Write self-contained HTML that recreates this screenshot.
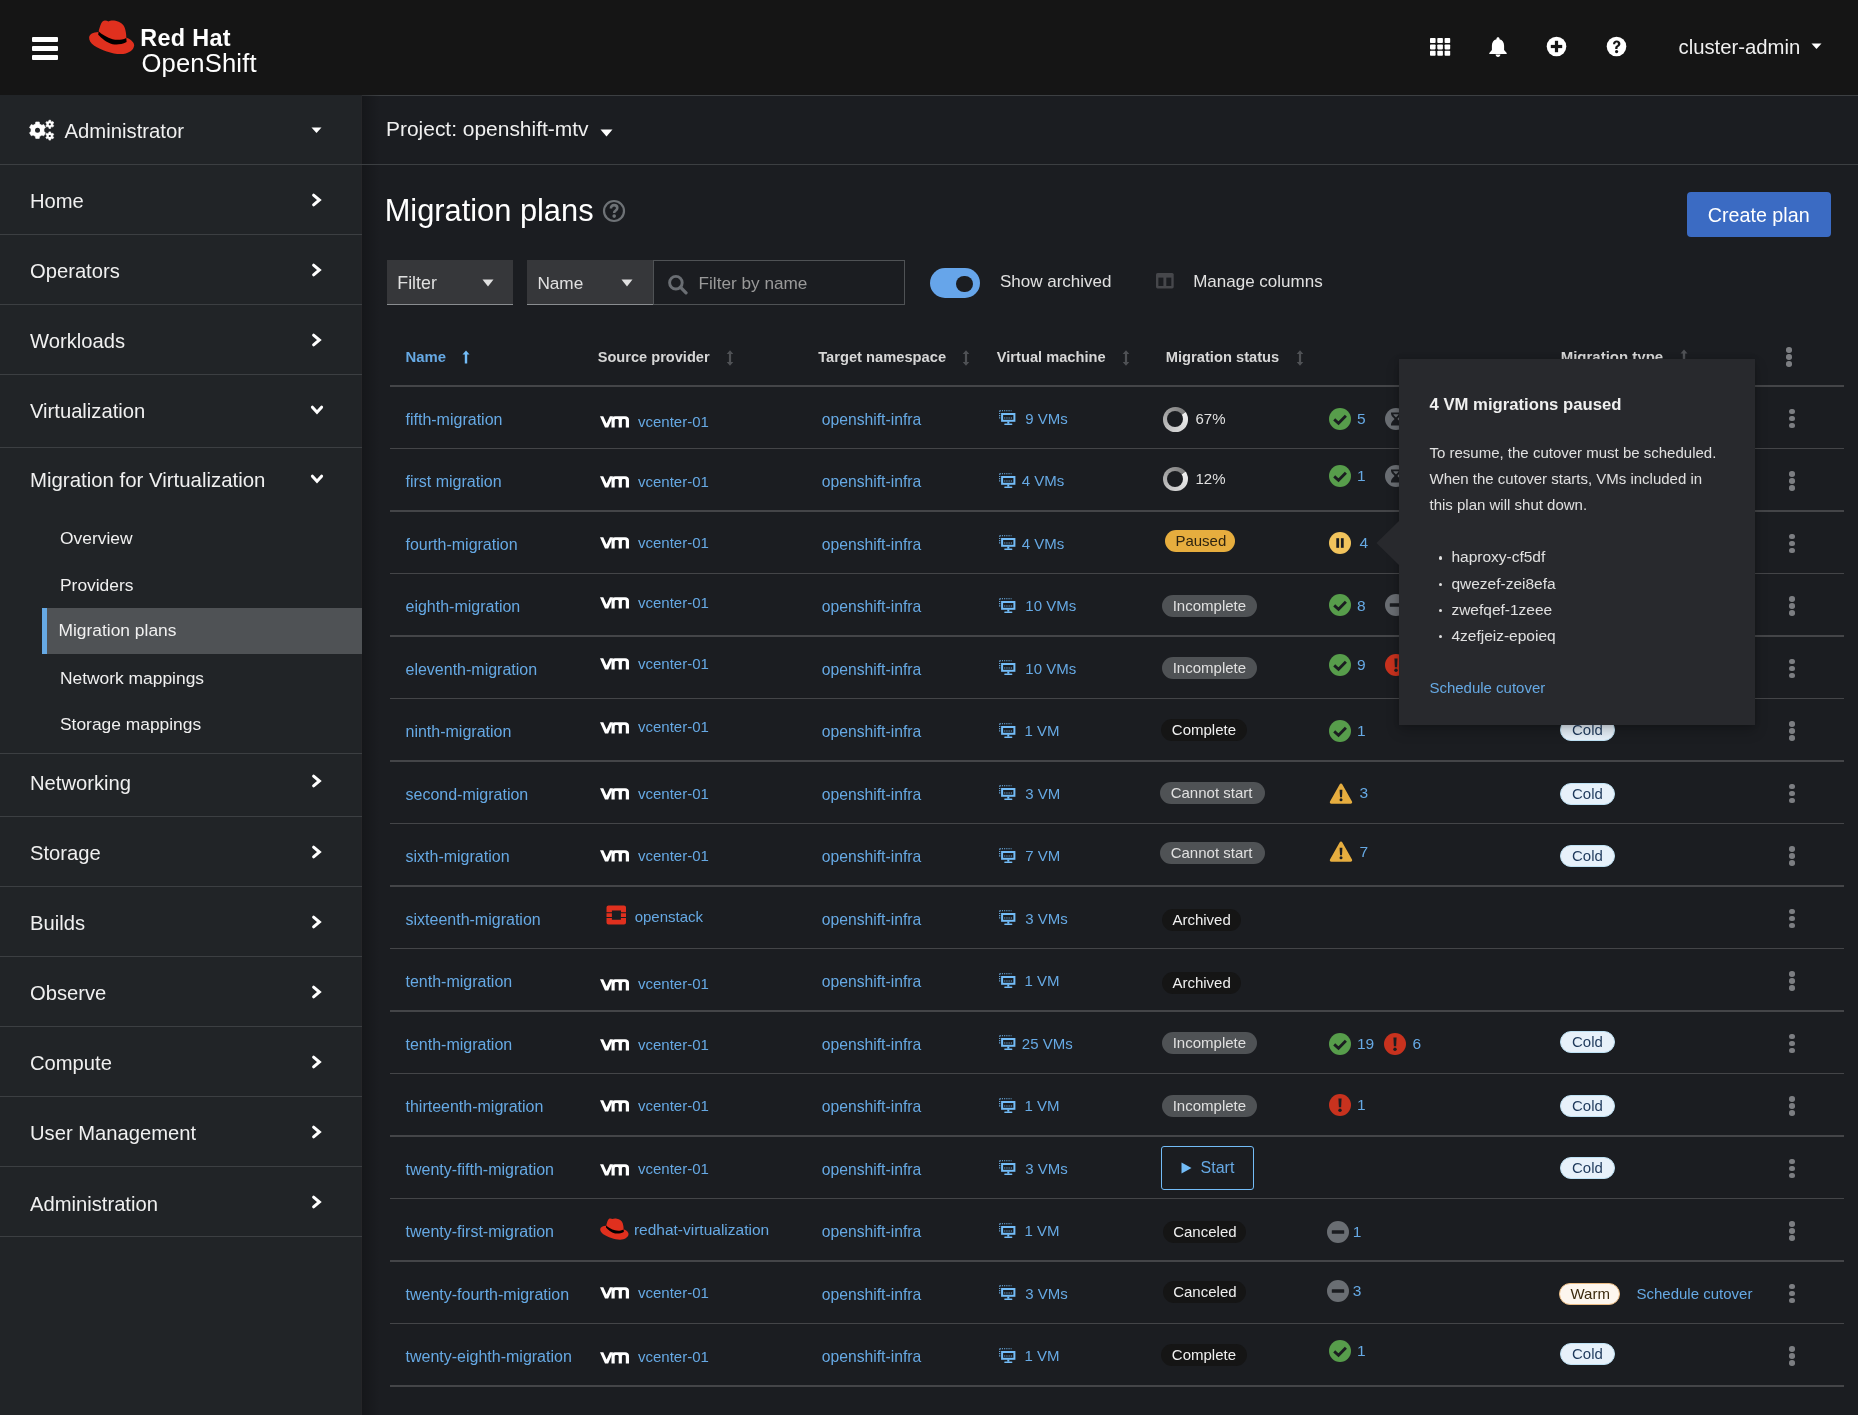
<!DOCTYPE html>
<html><head><meta charset="utf-8"><title>Migration plans</title>
<style>
html,body{margin:0;padding:0;width:1858px;height:1415px;overflow:hidden;background:#1b1d21;}
body{position:relative;font-family:'Liberation Sans', sans-serif;}
.t{position:absolute;line-height:0;white-space:nowrap;}
.r{position:absolute;display:block;}
</style></head><body><div id="root" style="position:absolute;left:0;top:0;width:1858px;height:1415px;will-change:transform">
<div class="r" style="left:0px;top:0px;width:1858px;height:95px;background:#151515;"></div>
<div class="r" style="left:0px;top:95px;width:362px;height:1320px;background:#212427;"></div>
<div class="r" style="left:362px;top:95px;width:1496px;height:1320px;background:#1b1d21;"></div>
<div class="r" style="left:362px;top:95px;width:1496px;height:1px;background:#3c3f42;"></div>
<div class="r" style="left:362px;top:95px;width:18px;height:1320px;background:linear-gradient(90deg, rgba(0,0,0,0.22), rgba(0,0,0,0));"></div>
<div class="r" style="left:361px;top:95px;width:1px;height:1320px;background:#252528;"></div>
<div class="r" style="left:32px;top:37px;width:26px;height:4.5px;background:#fff;border-radius:1px"></div>
<div class="r" style="left:32px;top:46.2px;width:26px;height:4.5px;background:#fff;border-radius:1px"></div>
<div class="r" style="left:32px;top:55.4px;width:26px;height:4.5px;background:#fff;border-radius:1px"></div>
<svg class="r" style="left:84px;top:15px;" width="56" height="45" viewBox="0 0 56 45"><path d="M5.1 22.3C5.5 19.3 9 17.2 14.5 17L43.2 22.9C46.5 24.2 50.1 27 50.1 30.2C50.1 35 44 39.1 36.6 39.1C28 39.1 17 35 10 30.5C6.8 28.4 4.9 25.2 5.1 22.3Z" fill="#e0301e"/><path d="M14.6 16.5C15.8 12 17 7.5 18.8 6.2C20.5 5 23 5.8 24.5 6.4C26 5.6 28.5 5.2 31.5 5.8C36 6.8 39.5 9 40.8 13C41.8 16 42.3 19.5 42.3 22.9C37 25.5 32 25 28.6 24.2C23 22.5 18 19.5 14.6 16.5Z" fill="#e0301e"/><path d="M14.6 16.5C18 19.5 23 22.5 28.6 24.2C32 25 37 25.5 42.3 22.9L42.6 27C37.5 29.6 33 29.8 28.6 29.2C22.5 27.8 17.5 23.2 14.2 19.8Z" fill="#000"/></svg>
<div class="t" style="left:140.3px;top:37.59px;font-size:23.4px;color:#fff;font-weight:700;letter-spacing:0.3px;">Red Hat</div>
<div class="t" style="left:141.5px;top:62.73px;font-size:25.6px;color:#fff;letter-spacing:0.15px;">OpenShift</div>
<svg class="r" style="left:1430px;top:38px;" width="21" height="19" viewBox="0 0 21 19"><rect x="0.0" y="0.0" width="5.6" height="5" rx="0.8" fill="#fff"/><rect x="7.3" y="0.0" width="5.6" height="5" rx="0.8" fill="#fff"/><rect x="14.6" y="0.0" width="5.6" height="5" rx="0.8" fill="#fff"/><rect x="0.0" y="6.4" width="5.6" height="5" rx="0.8" fill="#fff"/><rect x="7.3" y="6.4" width="5.6" height="5" rx="0.8" fill="#fff"/><rect x="14.6" y="6.4" width="5.6" height="5" rx="0.8" fill="#fff"/><rect x="0.0" y="12.8" width="5.6" height="5" rx="0.8" fill="#fff"/><rect x="7.3" y="12.8" width="5.6" height="5" rx="0.8" fill="#fff"/><rect x="14.6" y="12.8" width="5.6" height="5" rx="0.8" fill="#fff"/></svg>
<svg class="r" style="left:1488px;top:36px;" width="20" height="22" viewBox="0 0 20 22"><path d="M10 1.2c0.9 0 1.5 0.6 1.5 1.4v0.6c3 0.7 4.6 3.2 4.6 6.5v4.2l2.6 3.2v0.9H1.3v-0.9l2.6-3.2V9.7c0-3.3 1.6-5.8 4.6-6.5V2.6c0-0.8 0.6-1.4 1.5-1.4z" fill="#fff"/><path d="M7.6 18.6h4.8c0 1.4-1.1 2.4-2.4 2.4s-2.4-1-2.4-2.4z" fill="#fff"/></svg>
<svg class="r" style="left:1546px;top:36px;" width="21" height="21" viewBox="0 0 21 21"><circle cx="10.5" cy="10.5" r="9.8" fill="#fff"/><rect x="8.9" y="4.8" width="3.2" height="11.4" fill="#151515"/><rect x="4.8" y="8.9" width="11.4" height="3.2" fill="#151515"/></svg>
<svg class="r" style="left:1606px;top:36px;" width="21" height="21" viewBox="0 0 21 21"><circle cx="10.5" cy="10.5" r="9.8" fill="#fff"/><path d="M7 8.2c0-2.2 1.6-3.6 3.7-3.6 2.2 0 3.7 1.3 3.7 3.2 0 1.5-0.9 2.3-1.9 3-0.8 0.5-1 0.8-1 1.6v0.5H9.2v-0.7c0-1.3 0.5-2 1.5-2.7 0.8-0.5 1.2-0.9 1.2-1.6 0-0.8-0.6-1.3-1.3-1.3-0.8 0-1.4 0.6-1.4 1.6z" fill="#151515"/><circle cx="10.6" cy="15.6" r="1.6" fill="#151515"/></svg>
<div class="t" style="left:1678.5px;top:47.47px;font-size:20.3px;color:#f0f0f0;">cluster-admin</div>
<svg class="r" style="left:1811px;top:43px;" width="11" height="7" viewBox="0 0 11 7"><path d="M0.5 0.5h10L5.5 6z" fill="#fff"/></svg>
<svg class="r" style="left:28px;top:119px;" width="28" height="23" viewBox="0 0 28 23"><path d="M7.75 2.98 L11.25 2.98 L11.54 4.92 L13.92 6.30 L15.74 5.58 L17.49 8.60 L15.96 9.83 L15.96 12.57 L17.49 13.80 L15.74 16.82 L13.92 16.10 L11.54 17.48 L11.25 19.42 L7.75 19.42 L7.46 17.48 L5.08 16.10 L3.26 16.82 L1.51 13.80 L3.04 12.57 L3.04 9.83 L1.51 8.60 L3.26 5.58 L5.08 6.30 L7.46 4.92Z" fill="#fff" stroke="#fff" stroke-width="0.6" stroke-linejoin="round"/><circle cx="9.5" cy="11.2" r="2.5" fill="#212427"/><path d="M20.93 1.19 L22.67 1.19 L22.76 2.35 L23.87 3.00 L24.92 2.49 L25.79 4.00 L24.83 4.66 L24.83 5.94 L25.79 6.60 L24.92 8.11 L23.87 7.60 L22.76 8.25 L22.67 9.41 L20.93 9.41 L20.84 8.25 L19.73 7.60 L18.68 8.11 L17.81 6.60 L18.77 5.94 L18.77 4.66 L17.81 4.00 L18.68 2.49 L19.73 3.00 L20.84 2.35Z" fill="#fff" stroke="#fff" stroke-width="0.6" stroke-linejoin="round"/><circle cx="21.8" cy="5.3" r="1.1" fill="#212427"/><path d="M20.93 12.89 L22.67 12.89 L22.76 14.05 L23.87 14.70 L24.92 14.19 L25.79 15.70 L24.83 16.36 L24.83 17.64 L25.79 18.30 L24.92 19.81 L23.87 19.30 L22.76 19.95 L22.67 21.11 L20.93 21.11 L20.84 19.95 L19.73 19.30 L18.68 19.81 L17.81 18.30 L18.77 17.64 L18.77 16.36 L17.81 15.70 L18.68 14.19 L19.73 14.70 L20.84 14.05Z" fill="#fff" stroke="#fff" stroke-width="0.6" stroke-linejoin="round"/><circle cx="21.8" cy="17.0" r="1.1" fill="#212427"/></svg>
<div class="t" style="left:64.5px;top:130.67px;font-size:20.3px;color:#f0f0f0;">Administrator</div>
<svg class="r" style="left:311px;top:127px;" width="11" height="7" viewBox="0 0 11 7"><path d="M0.5 0.5h10L5.5 6z" fill="#fff"/></svg>
<div class="r" style="left:0px;top:164px;width:362px;height:1px;background:#3c3f42;"></div>
<div class="t" style="left:30.0px;top:200.90px;font-size:20.2px;color:#f0f0f0;">Home</div>
<svg class="r" style="left:309px;top:191.5px;" width="16" height="16" viewBox="0 0 16 16"><path d="M4.6 3.1L10.4 8 4.6 12.9" fill="none" stroke="#fff" stroke-width="3" stroke-linecap="round" stroke-linejoin="miter"/></svg>
<div class="r" style="left:0px;top:234px;width:362px;height:1px;background:#3c3f42;"></div>
<div class="t" style="left:30.0px;top:270.90px;font-size:20.2px;color:#f0f0f0;">Operators</div>
<svg class="r" style="left:309px;top:261.5px;" width="16" height="16" viewBox="0 0 16 16"><path d="M4.6 3.1L10.4 8 4.6 12.9" fill="none" stroke="#fff" stroke-width="3" stroke-linecap="round" stroke-linejoin="miter"/></svg>
<div class="r" style="left:0px;top:304px;width:362px;height:1px;background:#3c3f42;"></div>
<div class="t" style="left:30.0px;top:340.90px;font-size:20.2px;color:#f0f0f0;">Workloads</div>
<svg class="r" style="left:309px;top:331.5px;" width="16" height="16" viewBox="0 0 16 16"><path d="M4.6 3.1L10.4 8 4.6 12.9" fill="none" stroke="#fff" stroke-width="3" stroke-linecap="round" stroke-linejoin="miter"/></svg>
<div class="r" style="left:0px;top:374px;width:362px;height:1px;background:#3c3f42;"></div>
<div class="t" style="left:30.0px;top:411.10px;font-size:20.2px;color:#f0f0f0;">Virtualization</div>
<svg class="r" style="left:309px;top:402.0px;" width="16" height="16" viewBox="0 0 16 16"><path d="M3.4 5.2L8 10.3 12.6 5.2" fill="none" stroke="#fff" stroke-width="3" stroke-linecap="round" stroke-linejoin="miter"/></svg>
<div class="r" style="left:0px;top:446.5px;width:362px;height:1.5px;background:#3c3f42;"></div>
<div class="t" style="left:30.0px;top:480.33px;font-size:20.4px;color:#f0f0f0;">Migration for Virtualization</div>
<svg class="r" style="left:309px;top:471.29999999999995px;" width="16" height="16" viewBox="0 0 16 16"><path d="M3.4 5.2L8 10.3 12.6 5.2" fill="none" stroke="#fff" stroke-width="3" stroke-linecap="round" stroke-linejoin="miter"/></svg>
<div class="r" style="left:42px;top:608px;width:320px;height:46px;background:#4f5255;"></div>
<div class="r" style="left:42px;top:608px;width:5px;height:46px;background:#66a9e4;"></div>
<div class="t" style="left:60.0px;top:538.17px;font-size:17.4px;color:#f0f0f0;">Overview</div>
<div class="t" style="left:60.0px;top:585.47px;font-size:17.4px;color:#f0f0f0;">Providers</div>
<div class="t" style="left:58.5px;top:630.47px;font-size:17.4px;color:#f0f0f0;">Migration plans</div>
<div class="t" style="left:60.0px;top:677.97px;font-size:17.4px;color:#f0f0f0;">Network mappings</div>
<div class="t" style="left:60.0px;top:723.77px;font-size:17.4px;color:#f0f0f0;">Storage mappings</div>
<div class="r" style="left:0px;top:753px;width:362px;height:1px;background:#3c3f42;"></div>
<div class="t" style="left:30.0px;top:782.60px;font-size:20.2px;color:#f0f0f0;">Networking</div>
<svg class="r" style="left:309px;top:773.2px;" width="16" height="16" viewBox="0 0 16 16"><path d="M4.6 3.1L10.4 8 4.6 12.9" fill="none" stroke="#fff" stroke-width="3" stroke-linecap="round" stroke-linejoin="miter"/></svg>
<div class="r" style="left:0px;top:816px;width:362px;height:1px;background:#3c3f42;"></div>
<div class="t" style="left:30.0px;top:853.00px;font-size:20.2px;color:#f0f0f0;">Storage</div>
<svg class="r" style="left:309px;top:843.6px;" width="16" height="16" viewBox="0 0 16 16"><path d="M4.6 3.1L10.4 8 4.6 12.9" fill="none" stroke="#fff" stroke-width="3" stroke-linecap="round" stroke-linejoin="miter"/></svg>
<div class="r" style="left:0px;top:886px;width:362px;height:1px;background:#3c3f42;"></div>
<div class="t" style="left:30.0px;top:923.00px;font-size:20.2px;color:#f0f0f0;">Builds</div>
<svg class="r" style="left:309px;top:913.6px;" width="16" height="16" viewBox="0 0 16 16"><path d="M4.6 3.1L10.4 8 4.6 12.9" fill="none" stroke="#fff" stroke-width="3" stroke-linecap="round" stroke-linejoin="miter"/></svg>
<div class="r" style="left:0px;top:956px;width:362px;height:1px;background:#3c3f42;"></div>
<div class="t" style="left:30.0px;top:993.00px;font-size:20.2px;color:#f0f0f0;">Observe</div>
<svg class="r" style="left:309px;top:983.6px;" width="16" height="16" viewBox="0 0 16 16"><path d="M4.6 3.1L10.4 8 4.6 12.9" fill="none" stroke="#fff" stroke-width="3" stroke-linecap="round" stroke-linejoin="miter"/></svg>
<div class="r" style="left:0px;top:1026px;width:362px;height:1px;background:#3c3f42;"></div>
<div class="t" style="left:30.0px;top:1063.00px;font-size:20.2px;color:#f0f0f0;">Compute</div>
<svg class="r" style="left:309px;top:1053.6px;" width="16" height="16" viewBox="0 0 16 16"><path d="M4.6 3.1L10.4 8 4.6 12.9" fill="none" stroke="#fff" stroke-width="3" stroke-linecap="round" stroke-linejoin="miter"/></svg>
<div class="r" style="left:0px;top:1096px;width:362px;height:1px;background:#3c3f42;"></div>
<div class="t" style="left:30.0px;top:1133.00px;font-size:20.2px;color:#f0f0f0;">User Management</div>
<svg class="r" style="left:309px;top:1123.6px;" width="16" height="16" viewBox="0 0 16 16"><path d="M4.6 3.1L10.4 8 4.6 12.9" fill="none" stroke="#fff" stroke-width="3" stroke-linecap="round" stroke-linejoin="miter"/></svg>
<div class="r" style="left:0px;top:1166px;width:362px;height:1px;background:#3c3f42;"></div>
<div class="t" style="left:30.0px;top:1203.60px;font-size:20.2px;color:#f0f0f0;">Administration</div>
<svg class="r" style="left:309px;top:1194.1999999999998px;" width="16" height="16" viewBox="0 0 16 16"><path d="M4.6 3.1L10.4 8 4.6 12.9" fill="none" stroke="#fff" stroke-width="3" stroke-linecap="round" stroke-linejoin="miter"/></svg>
<div class="r" style="left:0px;top:1236px;width:362px;height:1px;background:#3c3f42;"></div>
<div class="t" style="left:386.0px;top:128.64px;font-size:20.95px;color:#f0f0f0;">Project: openshift-mtv</div>
<svg class="r" style="left:599.5px;top:128.5px;" width="13" height="8" viewBox="0 0 13 8"><path d="M0.5 0.5h12L6.5 7.5z" fill="#fff"/></svg>
<div class="r" style="left:362px;top:164px;width:1496px;height:1px;background:#3c3f42;"></div>
<div class="t" style="left:384.7px;top:211.13px;font-size:30.8px;color:#fff;">Migration plans</div>
<svg class="r" style="left:602px;top:199px;" width="24" height="24" viewBox="0 0 24 24"><circle cx="12" cy="12" r="10" fill="none" stroke="#6e7276" stroke-width="2.2"/><path d="M8.9 9.4C8.9 7.3 10.3 6.1 12.1 6.1C14 6.1 15.3 7.3 15.3 9C15.3 10.6 14 11.3 13.1 12C12.4 12.5 12.2 13 12.2 13.9" fill="none" stroke="#6e7276" stroke-width="2.6"/><circle cx="12.2" cy="17.1" r="1.8" fill="#6e7276"/></svg>
<div class="r" style="left:1687px;top:192px;width:144px;height:45px;background:#3b6bc3;border-radius:4px"></div>
<div class="t" style="left:1707.8px;top:215.47px;font-size:19.7px;color:#fff;">Create plan</div>
<div class="r" style="left:387px;top:260px;width:126px;height:45px;background:#36373a;border-bottom:1.5px solid #8a8d90;box-sizing:border-box"></div>
<div class="t" style="left:397.3px;top:282.83px;font-size:17.8px;color:#e0e0e0;">Filter</div>
<svg class="r" style="left:481.5px;top:278.5px;" width="12" height="8" viewBox="0 0 12 8"><path d="M0.5 0.5h11L6 7.5z" fill="#e0e0e0"/></svg>
<div class="r" style="left:527px;top:260px;width:126px;height:45px;background:#36373a;border-bottom:1.5px solid #8a8d90;box-sizing:border-box"></div>
<div class="t" style="left:537.4px;top:283.04px;font-size:17.2px;color:#e0e0e0;">Name</div>
<svg class="r" style="left:621.4px;top:278.5px;" width="12" height="8" viewBox="0 0 12 8"><path d="M0.5 0.5h11L6 7.5z" fill="#e0e0e0"/></svg>
<div class="r" style="left:653px;top:260px;width:252px;height:45px;background:transparent;border:1px solid #4f5255;box-sizing:border-box"></div>
<svg class="r" style="left:667px;top:272.5px;" width="22" height="22" viewBox="0 0 22 22"><circle cx="8.9" cy="9.7" r="6.3" fill="none" stroke="#6a6e73" stroke-width="2.9"/><path d="M13.4 14.2l5.6 5.6" stroke="#6a6e73" stroke-width="3.3" stroke-linecap="round"/></svg>
<div class="t" style="left:698.5px;top:283.04px;font-size:17.2px;color:#9a9a9a;">Filter by name</div>
<div class="r" style="left:930px;top:268px;width:50px;height:30px;background:#66a5ea;border-radius:15px"></div>
<div class="r" style="left:956.4px;top:275.8px;width:16.4px;height:16.4px;border-radius:50%;background:#1b1d21"></div>
<div class="t" style="left:1000.0px;top:281.81px;font-size:17.0px;color:#e0e0e0;">Show archived</div>
<svg class="r" style="left:1156px;top:273.4px;" width="18" height="16" viewBox="0 0 18 16"><rect x="0" y="0" width="17.7" height="15.4" rx="1.6" fill="#46474b"/><rect x="2.4" y="4.6" width="5" height="8.4" fill="#1b1d21"/><rect x="10.3" y="4.6" width="5" height="8.4" fill="#1b1d21"/></svg>
<div class="t" style="left:1193.2px;top:281.81px;font-size:17.0px;color:#e0e0e0;">Manage columns</div>
<div class="t" style="left:405.5px;top:357.34px;font-size:14.9px;color:#66a9e4;font-weight:700;">Name</div>
<svg class="r" style="left:462px;top:349.5px;" width="8" height="14" viewBox="0 0 8 14"><path d="M4 0.5l3.5 4H5.2v9H2.8v-9H0.5z" fill="#73bcf7"/></svg>
<div class="t" style="left:597.7px;top:357.44px;font-size:14.6px;color:#d6d6d6;font-weight:700;">Source provider</div>
<svg class="r" style="left:725.5px;top:349.7px;" width="8" height="16" viewBox="0 0 8 16"><path d="M4 0.3l3.3 3.7H5.1v8h2.2L4 15.7 0.7 12h2.2V4H0.7z" fill="#4f5155"/></svg>
<div class="t" style="left:818.2px;top:357.41px;font-size:14.7px;color:#d6d6d6;font-weight:700;">Target namespace</div>
<svg class="r" style="left:961.5px;top:349.7px;" width="8" height="16" viewBox="0 0 8 16"><path d="M4 0.3l3.3 3.7H5.1v8h2.2L4 15.7 0.7 12h2.2V4H0.7z" fill="#4f5155"/></svg>
<div class="t" style="left:996.8px;top:357.42px;font-size:14.65px;color:#d6d6d6;font-weight:700;">Virtual machine</div>
<svg class="r" style="left:1122px;top:349.7px;" width="8" height="16" viewBox="0 0 8 16"><path d="M4 0.3l3.3 3.7H5.1v8h2.2L4 15.7 0.7 12h2.2V4H0.7z" fill="#4f5155"/></svg>
<div class="t" style="left:1165.8px;top:357.41px;font-size:14.7px;color:#d6d6d6;font-weight:700;">Migration status</div>
<svg class="r" style="left:1295.5px;top:349.7px;" width="8" height="16" viewBox="0 0 8 16"><path d="M4 0.3l3.3 3.7H5.1v8h2.2L4 15.7 0.7 12h2.2V4H0.7z" fill="#4f5155"/></svg>
<div class="t" style="left:1560.7px;top:357.30px;font-size:15.0px;color:#d6d6d6;font-weight:700;">Migration type</div>
<svg class="r" style="left:1680px;top:349px;" width="8" height="14" viewBox="0 0 8 14"><path d="M4 0.5l3.5 4H5.2v9H2.8v-9H0.5z" fill="#4f5155"/></svg>
<div class="r" style="left:390px;top:385px;width:1454px;height:1.5px;background:#444548;"></div>
<div class="r" style="left:1786.2px;top:347.2px;width:5.6px;height:5.6px;border-radius:50%;background:#7c7e82"></div>
<div class="r" style="left:1786.2px;top:354.1px;width:5.6px;height:5.6px;border-radius:50%;background:#7c7e82"></div>
<div class="r" style="left:1786.2px;top:361.0px;width:5.6px;height:5.6px;border-radius:50%;background:#7c7e82"></div>
<div class="t" style="left:405.5px;top:419.51px;font-size:16px;color:#66a9e4;">fifth-migration</div>
<svg class="r" style="left:599.2px;top:415.34999999999997px;" width="31" height="13" viewBox="0 0 31 13"><path d="M1 1.2h3.3l3.3 7.4 3.3-7.4h3.1L9.2 12.4H6z" fill="#fff"/><path d="M12.5 12.4V4.6c0-2.2 1.3-3.4 3.5-3.4h10.2c2.3 0 3.8 1.3 3.8 3.6v7.6h-3.2V5.4c0-0.8-0.6-1.4-1.4-1.4h-1.1c-0.8 0-1.4 0.6-1.4 1.4v7h-3.2V5.4c0-0.8-0.6-1.4-1.4-1.4h-1.2c-0.8 0-1.4 0.6-1.4 1.4v7z" fill="#fff"/></svg>
<div class="t" style="left:638.0px;top:421.95px;font-size:15px;color:#66a9e4;">vcenter-01</div>
<div class="t" style="left:821.8px;top:419.61px;font-size:15.7px;color:#66a9e4;">openshift-infra</div>
<svg class="r" style="left:998.5px;top:410.05px;" width="18" height="16" viewBox="0 0 18 16"><path d="M0.7 0.7H12.5M0.7 0.7V9" fill="none" stroke="#73bcf7" stroke-width="1.1" stroke-dasharray="1.1 1.1"/><rect x="3.1" y="4" width="12.3" height="6.8" fill="none" stroke="#73bcf7" stroke-width="2"/><path d="M5.2 8h8" stroke="#73bcf7" stroke-width="1.1" stroke-dasharray="1.1 1.1"/><rect x="8.3" y="11.5" width="2" height="2.2" fill="#73bcf7"/><rect x="5.2" y="13.4" width="8.2" height="1.5" rx="0.7" fill="#73bcf7"/></svg>
<div class="t" style="left:1025.3px;top:418.85px;font-size:15px;color:#66a9e4;">9 VMs</div>
<div class="r" style="left:1163.0px;top:407.1px;width:24.6px;height:24.6px;border-radius:50%;background:conic-gradient(#8c8c8c 0deg,#7c7c7c 52deg,#f0f0f0 56deg,#e2e2e2 110deg,#cacaca 200deg,#ababab 280deg,#8c8c8c 360deg)"></div>
<div class="r" style="left:1167.3px;top:411.4px;width:16px;height:16px;border-radius:50%;background:#1b1d21"></div>
<div class="t" style="left:1195.5px;top:419.35px;font-size:15px;color:#e0e0e0;">67%</div>
<svg class="r" style="left:1329.2px;top:407.85px;" width="22" height="22" viewBox="0 0 22 22"><circle cx="11" cy="11" r="11" fill="#579d4b"/><path d="M5.2 11.4l4.3 3.9 7.4-7.5" fill="none" stroke="#1b1d21" stroke-width="2.9"/></svg>
<div class="t" style="left:1357.0px;top:419.08px;font-size:15.5px;color:#66a9e4;">5</div>
<svg class="r" style="left:1385.2px;top:407.85px;" width="22" height="22" viewBox="0 0 22 22"><circle cx="11" cy="11" r="11" fill="#6a6e73"/><path d="M6 4.5h10v1.3c0 2.2-2.6 3.8-3.6 5.2 1 1.4 3.6 3 3.6 5.2v1.3H6v-1.3c0-2.2 2.6-3.8 3.6-5.2C8.6 9.6 6 8 6 5.8z" fill="#1b1d21"/><path d="M8.3 6.3h5.4c-0.4 1.3-2 2.4-2.7 3.3-0.7-0.9-2.3-2-2.7-3.3z" fill="#6a6e73"/></svg>
<div class="r" style="left:1789.2px;top:408.9px;width:5.6px;height:5.6px;border-radius:50%;background:#7c7e82"></div>
<div class="r" style="left:1789.2px;top:415.8px;width:5.6px;height:5.6px;border-radius:50%;background:#7c7e82"></div>
<div class="r" style="left:1789.2px;top:422.6px;width:5.6px;height:5.6px;border-radius:50%;background:#7c7e82"></div>
<div class="r" style="left:390px;top:447.5px;width:1454px;height:1.5px;background:#444548;"></div>
<div class="t" style="left:405.5px;top:482.01px;font-size:16px;color:#66a9e4;">first migration</div>
<svg class="r" style="left:599.2px;top:475.45px;" width="31" height="13" viewBox="0 0 31 13"><path d="M1 1.2h3.3l3.3 7.4 3.3-7.4h3.1L9.2 12.4H6z" fill="#fff"/><path d="M12.5 12.4V4.6c0-2.2 1.3-3.4 3.5-3.4h10.2c2.3 0 3.8 1.3 3.8 3.6v7.6h-3.2V5.4c0-0.8-0.6-1.4-1.4-1.4h-1.1c-0.8 0-1.4 0.6-1.4 1.4v7h-3.2V5.4c0-0.8-0.6-1.4-1.4-1.4h-1.2c-0.8 0-1.4 0.6-1.4 1.4v7z" fill="#fff"/></svg>
<div class="t" style="left:638.0px;top:482.05px;font-size:15px;color:#66a9e4;">vcenter-01</div>
<div class="t" style="left:821.8px;top:482.11px;font-size:15.7px;color:#66a9e4;">openshift-infra</div>
<svg class="r" style="left:998.5px;top:472.55px;" width="18" height="16" viewBox="0 0 18 16"><path d="M0.7 0.7H12.5M0.7 0.7V9" fill="none" stroke="#73bcf7" stroke-width="1.1" stroke-dasharray="1.1 1.1"/><rect x="3.1" y="4" width="12.3" height="6.8" fill="none" stroke="#73bcf7" stroke-width="2"/><path d="M5.2 8h8" stroke="#73bcf7" stroke-width="1.1" stroke-dasharray="1.1 1.1"/><rect x="8.3" y="11.5" width="2" height="2.2" fill="#73bcf7"/><rect x="5.2" y="13.4" width="8.2" height="1.5" rx="0.7" fill="#73bcf7"/></svg>
<div class="t" style="left:1021.8px;top:481.35px;font-size:15px;color:#66a9e4;">4 VMs</div>
<div class="r" style="left:1163.0px;top:466.6px;width:24.6px;height:24.6px;border-radius:50%;background:conic-gradient(#8c8c8c 0deg,#7c7c7c 52deg,#f0f0f0 56deg,#e2e2e2 110deg,#cacaca 200deg,#ababab 280deg,#8c8c8c 360deg)"></div>
<div class="r" style="left:1167.3px;top:470.9px;width:16px;height:16px;border-radius:50%;background:#1b1d21"></div>
<div class="t" style="left:1195.5px;top:478.85px;font-size:15px;color:#e0e0e0;">12%</div>
<svg class="r" style="left:1329.2px;top:464.85px;" width="22" height="22" viewBox="0 0 22 22"><circle cx="11" cy="11" r="11" fill="#579d4b"/><path d="M5.2 11.4l4.3 3.9 7.4-7.5" fill="none" stroke="#1b1d21" stroke-width="2.9"/></svg>
<div class="t" style="left:1357.0px;top:476.08px;font-size:15.5px;color:#66a9e4;">1</div>
<svg class="r" style="left:1385.2px;top:464.85px;" width="22" height="22" viewBox="0 0 22 22"><circle cx="11" cy="11" r="11" fill="#6a6e73"/><path d="M6 4.5h10v1.3c0 2.2-2.6 3.8-3.6 5.2 1 1.4 3.6 3 3.6 5.2v1.3H6v-1.3c0-2.2 2.6-3.8 3.6-5.2C8.6 9.6 6 8 6 5.8z" fill="#1b1d21"/><path d="M8.3 6.3h5.4c-0.4 1.3-2 2.4-2.7 3.3-0.7-0.9-2.3-2-2.7-3.3z" fill="#6a6e73"/></svg>
<div class="r" style="left:1789.2px;top:471.4px;width:5.6px;height:5.6px;border-radius:50%;background:#7c7e82"></div>
<div class="r" style="left:1789.2px;top:478.2px;width:5.6px;height:5.6px;border-radius:50%;background:#7c7e82"></div>
<div class="r" style="left:1789.2px;top:485.1px;width:5.6px;height:5.6px;border-radius:50%;background:#7c7e82"></div>
<div class="r" style="left:390px;top:510.0px;width:1454px;height:1.5px;background:#444548;"></div>
<div class="t" style="left:405.5px;top:544.51px;font-size:16px;color:#66a9e4;">fourth-migration</div>
<svg class="r" style="left:599.2px;top:536.25px;" width="31" height="13" viewBox="0 0 31 13"><path d="M1 1.2h3.3l3.3 7.4 3.3-7.4h3.1L9.2 12.4H6z" fill="#fff"/><path d="M12.5 12.4V4.6c0-2.2 1.3-3.4 3.5-3.4h10.2c2.3 0 3.8 1.3 3.8 3.6v7.6h-3.2V5.4c0-0.8-0.6-1.4-1.4-1.4h-1.1c-0.8 0-1.4 0.6-1.4 1.4v7h-3.2V5.4c0-0.8-0.6-1.4-1.4-1.4h-1.2c-0.8 0-1.4 0.6-1.4 1.4v7z" fill="#fff"/></svg>
<div class="t" style="left:638.0px;top:542.85px;font-size:15px;color:#66a9e4;">vcenter-01</div>
<div class="t" style="left:821.8px;top:544.61px;font-size:15.7px;color:#66a9e4;">openshift-infra</div>
<svg class="r" style="left:998.5px;top:535.05px;" width="18" height="16" viewBox="0 0 18 16"><path d="M0.7 0.7H12.5M0.7 0.7V9" fill="none" stroke="#73bcf7" stroke-width="1.1" stroke-dasharray="1.1 1.1"/><rect x="3.1" y="4" width="12.3" height="6.8" fill="none" stroke="#73bcf7" stroke-width="2"/><path d="M5.2 8h8" stroke="#73bcf7" stroke-width="1.1" stroke-dasharray="1.1 1.1"/><rect x="8.3" y="11.5" width="2" height="2.2" fill="#73bcf7"/><rect x="5.2" y="13.4" width="8.2" height="1.5" rx="0.7" fill="#73bcf7"/></svg>
<div class="t" style="left:1021.8px;top:543.85px;font-size:15px;color:#66a9e4;">4 VMs</div>
<div class="r" style="left:1165px;top:530.4px;width:70px;height:22px;background:#e6ad3e;border-radius:12px;"></div>
<div class="t" style="left:1175.4px;top:541.40px;font-size:15px;color:#2f2410;">Paused</div>
<svg class="r" style="left:1329px;top:531.75px;" width="22" height="22" viewBox="0 0 22 22"><circle cx="11" cy="11" r="11" fill="#f1c35c"/><rect x="7.3" y="6.2" width="2.8" height="9.6" fill="#1b1d21"/><rect x="11.9" y="6.2" width="2.8" height="9.6" fill="#1b1d21"/></svg>
<div class="t" style="left:1359.5px;top:542.98px;font-size:15.5px;color:#66a9e4;">4</div>
<div class="r" style="left:1789.2px;top:533.9px;width:5.6px;height:5.6px;border-radius:50%;background:#7c7e82"></div>
<div class="r" style="left:1789.2px;top:540.8px;width:5.6px;height:5.6px;border-radius:50%;background:#7c7e82"></div>
<div class="r" style="left:1789.2px;top:547.6px;width:5.6px;height:5.6px;border-radius:50%;background:#7c7e82"></div>
<div class="r" style="left:390px;top:572.5px;width:1454px;height:1.5px;background:#444548;"></div>
<div class="t" style="left:405.5px;top:607.01px;font-size:16px;color:#66a9e4;">eighth-migration</div>
<svg class="r" style="left:599.2px;top:595.9000000000001px;" width="31" height="13" viewBox="0 0 31 13"><path d="M1 1.2h3.3l3.3 7.4 3.3-7.4h3.1L9.2 12.4H6z" fill="#fff"/><path d="M12.5 12.4V4.6c0-2.2 1.3-3.4 3.5-3.4h10.2c2.3 0 3.8 1.3 3.8 3.6v7.6h-3.2V5.4c0-0.8-0.6-1.4-1.4-1.4h-1.1c-0.8 0-1.4 0.6-1.4 1.4v7h-3.2V5.4c0-0.8-0.6-1.4-1.4-1.4h-1.2c-0.8 0-1.4 0.6-1.4 1.4v7z" fill="#fff"/></svg>
<div class="t" style="left:638.0px;top:602.50px;font-size:15px;color:#66a9e4;">vcenter-01</div>
<div class="t" style="left:821.8px;top:607.11px;font-size:15.7px;color:#66a9e4;">openshift-infra</div>
<svg class="r" style="left:998.5px;top:597.55px;" width="18" height="16" viewBox="0 0 18 16"><path d="M0.7 0.7H12.5M0.7 0.7V9" fill="none" stroke="#73bcf7" stroke-width="1.1" stroke-dasharray="1.1 1.1"/><rect x="3.1" y="4" width="12.3" height="6.8" fill="none" stroke="#73bcf7" stroke-width="2"/><path d="M5.2 8h8" stroke="#73bcf7" stroke-width="1.1" stroke-dasharray="1.1 1.1"/><rect x="8.3" y="11.5" width="2" height="2.2" fill="#73bcf7"/><rect x="5.2" y="13.4" width="8.2" height="1.5" rx="0.7" fill="#73bcf7"/></svg>
<div class="t" style="left:1025.3px;top:606.35px;font-size:15px;color:#66a9e4;">10 VMs</div>
<div class="r" style="left:1162.3px;top:594.55px;width:94.7px;height:22px;background:#4f5255;border-radius:12px;"></div>
<div class="t" style="left:1172.7px;top:605.55px;font-size:15px;color:#e0e0e0;">Incomplete</div>
<svg class="r" style="left:1329.2px;top:594.35px;" width="22" height="22" viewBox="0 0 22 22"><circle cx="11" cy="11" r="11" fill="#579d4b"/><path d="M5.2 11.4l4.3 3.9 7.4-7.5" fill="none" stroke="#1b1d21" stroke-width="2.9"/></svg>
<div class="t" style="left:1357.0px;top:605.58px;font-size:15.5px;color:#66a9e4;">8</div>
<svg class="r" style="left:1385.3px;top:594.35px;" width="22" height="22" viewBox="0 0 22 22"><circle cx="11" cy="11" r="11" fill="#6a6e73"/><rect x="4.8" y="9.2" width="12.4" height="3.6" rx="0.6" fill="#1b1d21"/></svg>
<div class="r" style="left:1789.2px;top:596.4px;width:5.6px;height:5.6px;border-radius:50%;background:#7c7e82"></div>
<div class="r" style="left:1789.2px;top:603.2px;width:5.6px;height:5.6px;border-radius:50%;background:#7c7e82"></div>
<div class="r" style="left:1789.2px;top:610.1px;width:5.6px;height:5.6px;border-radius:50%;background:#7c7e82"></div>
<div class="r" style="left:390px;top:635.0px;width:1454px;height:1.5px;background:#444548;"></div>
<div class="t" style="left:405.5px;top:669.51px;font-size:16px;color:#66a9e4;">eleventh-migration</div>
<svg class="r" style="left:599.2px;top:657.0px;" width="31" height="13" viewBox="0 0 31 13"><path d="M1 1.2h3.3l3.3 7.4 3.3-7.4h3.1L9.2 12.4H6z" fill="#fff"/><path d="M12.5 12.4V4.6c0-2.2 1.3-3.4 3.5-3.4h10.2c2.3 0 3.8 1.3 3.8 3.6v7.6h-3.2V5.4c0-0.8-0.6-1.4-1.4-1.4h-1.1c-0.8 0-1.4 0.6-1.4 1.4v7h-3.2V5.4c0-0.8-0.6-1.4-1.4-1.4h-1.2c-0.8 0-1.4 0.6-1.4 1.4v7z" fill="#fff"/></svg>
<div class="t" style="left:638.0px;top:663.60px;font-size:15px;color:#66a9e4;">vcenter-01</div>
<div class="t" style="left:821.8px;top:669.61px;font-size:15.7px;color:#66a9e4;">openshift-infra</div>
<svg class="r" style="left:998.5px;top:660.05px;" width="18" height="16" viewBox="0 0 18 16"><path d="M0.7 0.7H12.5M0.7 0.7V9" fill="none" stroke="#73bcf7" stroke-width="1.1" stroke-dasharray="1.1 1.1"/><rect x="3.1" y="4" width="12.3" height="6.8" fill="none" stroke="#73bcf7" stroke-width="2"/><path d="M5.2 8h8" stroke="#73bcf7" stroke-width="1.1" stroke-dasharray="1.1 1.1"/><rect x="8.3" y="11.5" width="2" height="2.2" fill="#73bcf7"/><rect x="5.2" y="13.4" width="8.2" height="1.5" rx="0.7" fill="#73bcf7"/></svg>
<div class="t" style="left:1025.3px;top:668.85px;font-size:15px;color:#66a9e4;">10 VMs</div>
<div class="r" style="left:1162.3px;top:657.25px;width:94.7px;height:22px;background:#4f5255;border-radius:12px;"></div>
<div class="t" style="left:1172.7px;top:668.25px;font-size:15px;color:#e0e0e0;">Incomplete</div>
<svg class="r" style="left:1329.2px;top:654.25px;" width="22" height="22" viewBox="0 0 22 22"><circle cx="11" cy="11" r="11" fill="#579d4b"/><path d="M5.2 11.4l4.3 3.9 7.4-7.5" fill="none" stroke="#1b1d21" stroke-width="2.9"/></svg>
<div class="t" style="left:1357.0px;top:665.48px;font-size:15.5px;color:#66a9e4;">9</div>
<svg class="r" style="left:1385.3px;top:654.25px;" width="22" height="22" viewBox="0 0 22 22"><circle cx="11" cy="11" r="11" fill="#c8321e"/><path d="M9.4 4.6h3.2l-0.5 8.6h-2.2z" fill="#1b1d21"/><circle cx="11" cy="16.3" r="1.7" fill="#1b1d21"/></svg>
<div class="r" style="left:1789.2px;top:658.9px;width:5.6px;height:5.6px;border-radius:50%;background:#7c7e82"></div>
<div class="r" style="left:1789.2px;top:665.8px;width:5.6px;height:5.6px;border-radius:50%;background:#7c7e82"></div>
<div class="r" style="left:1789.2px;top:672.6px;width:5.6px;height:5.6px;border-radius:50%;background:#7c7e82"></div>
<div class="r" style="left:390px;top:697.5px;width:1454px;height:1.5px;background:#444548;"></div>
<div class="t" style="left:405.5px;top:732.01px;font-size:16px;color:#66a9e4;">ninth-migration</div>
<svg class="r" style="left:599.2px;top:720.8000000000001px;" width="31" height="13" viewBox="0 0 31 13"><path d="M1 1.2h3.3l3.3 7.4 3.3-7.4h3.1L9.2 12.4H6z" fill="#fff"/><path d="M12.5 12.4V4.6c0-2.2 1.3-3.4 3.5-3.4h10.2c2.3 0 3.8 1.3 3.8 3.6v7.6h-3.2V5.4c0-0.8-0.6-1.4-1.4-1.4h-1.1c-0.8 0-1.4 0.6-1.4 1.4v7h-3.2V5.4c0-0.8-0.6-1.4-1.4-1.4h-1.2c-0.8 0-1.4 0.6-1.4 1.4v7z" fill="#fff"/></svg>
<div class="t" style="left:638.0px;top:727.40px;font-size:15px;color:#66a9e4;">vcenter-01</div>
<div class="t" style="left:821.8px;top:732.11px;font-size:15.7px;color:#66a9e4;">openshift-infra</div>
<svg class="r" style="left:998.5px;top:722.55px;" width="18" height="16" viewBox="0 0 18 16"><path d="M0.7 0.7H12.5M0.7 0.7V9" fill="none" stroke="#73bcf7" stroke-width="1.1" stroke-dasharray="1.1 1.1"/><rect x="3.1" y="4" width="12.3" height="6.8" fill="none" stroke="#73bcf7" stroke-width="2"/><path d="M5.2 8h8" stroke="#73bcf7" stroke-width="1.1" stroke-dasharray="1.1 1.1"/><rect x="8.3" y="11.5" width="2" height="2.2" fill="#73bcf7"/><rect x="5.2" y="13.4" width="8.2" height="1.5" rx="0.7" fill="#73bcf7"/></svg>
<div class="t" style="left:1024.6px;top:731.35px;font-size:15px;color:#66a9e4;">1 VM</div>
<div class="r" style="left:1161.4px;top:719.45px;width:85.8px;height:22px;background:#151515;border-radius:12px;"></div>
<div class="t" style="left:1171.8px;top:730.45px;font-size:15px;color:#f0f0f0;">Complete</div>
<svg class="r" style="left:1329.2px;top:719.6px;" width="22" height="22" viewBox="0 0 22 22"><circle cx="11" cy="11" r="11" fill="#579d4b"/><path d="M5.2 11.4l4.3 3.9 7.4-7.5" fill="none" stroke="#1b1d21" stroke-width="2.9"/></svg>
<div class="t" style="left:1357.0px;top:730.83px;font-size:15.5px;color:#66a9e4;">1</div>
<div class="r" style="left:1560px;top:719.2px;width:55.1px;height:22px;background:#e7f1fa;border-radius:12px;border:1px solid #bee1f4;box-sizing:border-box;"></div>
<div class="t" style="left:1572.0px;top:730.20px;font-size:15px;color:#1f3a5c;">Cold</div>
<div class="r" style="left:1789.2px;top:721.4px;width:5.6px;height:5.6px;border-radius:50%;background:#7c7e82"></div>
<div class="r" style="left:1789.2px;top:728.2px;width:5.6px;height:5.6px;border-radius:50%;background:#7c7e82"></div>
<div class="r" style="left:1789.2px;top:735.1px;width:5.6px;height:5.6px;border-radius:50%;background:#7c7e82"></div>
<div class="r" style="left:390px;top:760.0px;width:1454px;height:1.5px;background:#444548;"></div>
<div class="t" style="left:405.5px;top:794.51px;font-size:16px;color:#66a9e4;">second-migration</div>
<svg class="r" style="left:599.2px;top:787.45px;" width="31" height="13" viewBox="0 0 31 13"><path d="M1 1.2h3.3l3.3 7.4 3.3-7.4h3.1L9.2 12.4H6z" fill="#fff"/><path d="M12.5 12.4V4.6c0-2.2 1.3-3.4 3.5-3.4h10.2c2.3 0 3.8 1.3 3.8 3.6v7.6h-3.2V5.4c0-0.8-0.6-1.4-1.4-1.4h-1.1c-0.8 0-1.4 0.6-1.4 1.4v7h-3.2V5.4c0-0.8-0.6-1.4-1.4-1.4h-1.2c-0.8 0-1.4 0.6-1.4 1.4v7z" fill="#fff"/></svg>
<div class="t" style="left:638.0px;top:794.05px;font-size:15px;color:#66a9e4;">vcenter-01</div>
<div class="t" style="left:821.8px;top:794.61px;font-size:15.7px;color:#66a9e4;">openshift-infra</div>
<svg class="r" style="left:998.5px;top:785.05px;" width="18" height="16" viewBox="0 0 18 16"><path d="M0.7 0.7H12.5M0.7 0.7V9" fill="none" stroke="#73bcf7" stroke-width="1.1" stroke-dasharray="1.1 1.1"/><rect x="3.1" y="4" width="12.3" height="6.8" fill="none" stroke="#73bcf7" stroke-width="2"/><path d="M5.2 8h8" stroke="#73bcf7" stroke-width="1.1" stroke-dasharray="1.1 1.1"/><rect x="8.3" y="11.5" width="2" height="2.2" fill="#73bcf7"/><rect x="5.2" y="13.4" width="8.2" height="1.5" rx="0.7" fill="#73bcf7"/></svg>
<div class="t" style="left:1025.3px;top:793.85px;font-size:15px;color:#66a9e4;">3 VM</div>
<div class="r" style="left:1160.3px;top:782.35px;width:104.6px;height:22px;background:#4f5255;border-radius:12px;"></div>
<div class="t" style="left:1170.7px;top:793.35px;font-size:15px;color:#e0e0e0;">Cannot start</div>
<svg class="r" style="left:1328.5px;top:782.75px;" width="24" height="21" viewBox="0 0 24 21"><path d="M12 0.6c0.6 0 1.1 0.3 1.4 0.9l9.6 17.1c0.6 1.1-0.2 2.2-1.4 2.2H2.4c-1.2 0-2-1.1-1.4-2.2l9.6-17.1c0.3-0.6 0.8-0.9 1.4-0.9z" fill="#e6ad3f"/><path d="M10.6 6.8h2.8l-0.4 7.4h-2z" fill="#1b1d21"/><circle cx="12" cy="16.7" r="1.5" fill="#1b1d21"/></svg>
<div class="t" style="left:1359.5px;top:793.48px;font-size:15.5px;color:#66a9e4;">3</div>
<div class="r" style="left:1560px;top:782.65px;width:55.1px;height:22px;background:#e7f1fa;border-radius:12px;border:1px solid #bee1f4;box-sizing:border-box;"></div>
<div class="t" style="left:1572.0px;top:793.65px;font-size:15px;color:#1f3a5c;">Cold</div>
<div class="r" style="left:1789.2px;top:783.9px;width:5.6px;height:5.6px;border-radius:50%;background:#7c7e82"></div>
<div class="r" style="left:1789.2px;top:790.8px;width:5.6px;height:5.6px;border-radius:50%;background:#7c7e82"></div>
<div class="r" style="left:1789.2px;top:797.6px;width:5.6px;height:5.6px;border-radius:50%;background:#7c7e82"></div>
<div class="r" style="left:390px;top:822.5px;width:1454px;height:1.5px;background:#444548;"></div>
<div class="t" style="left:405.5px;top:857.01px;font-size:16px;color:#66a9e4;">sixth-migration</div>
<svg class="r" style="left:599.2px;top:848.95px;" width="31" height="13" viewBox="0 0 31 13"><path d="M1 1.2h3.3l3.3 7.4 3.3-7.4h3.1L9.2 12.4H6z" fill="#fff"/><path d="M12.5 12.4V4.6c0-2.2 1.3-3.4 3.5-3.4h10.2c2.3 0 3.8 1.3 3.8 3.6v7.6h-3.2V5.4c0-0.8-0.6-1.4-1.4-1.4h-1.1c-0.8 0-1.4 0.6-1.4 1.4v7h-3.2V5.4c0-0.8-0.6-1.4-1.4-1.4h-1.2c-0.8 0-1.4 0.6-1.4 1.4v7z" fill="#fff"/></svg>
<div class="t" style="left:638.0px;top:855.55px;font-size:15px;color:#66a9e4;">vcenter-01</div>
<div class="t" style="left:821.8px;top:857.11px;font-size:15.7px;color:#66a9e4;">openshift-infra</div>
<svg class="r" style="left:998.5px;top:847.55px;" width="18" height="16" viewBox="0 0 18 16"><path d="M0.7 0.7H12.5M0.7 0.7V9" fill="none" stroke="#73bcf7" stroke-width="1.1" stroke-dasharray="1.1 1.1"/><rect x="3.1" y="4" width="12.3" height="6.8" fill="none" stroke="#73bcf7" stroke-width="2"/><path d="M5.2 8h8" stroke="#73bcf7" stroke-width="1.1" stroke-dasharray="1.1 1.1"/><rect x="8.3" y="11.5" width="2" height="2.2" fill="#73bcf7"/><rect x="5.2" y="13.4" width="8.2" height="1.5" rx="0.7" fill="#73bcf7"/></svg>
<div class="t" style="left:1025.3px;top:856.35px;font-size:15px;color:#66a9e4;">7 VM</div>
<div class="r" style="left:1160.3px;top:842.45px;width:104.6px;height:22px;background:#4f5255;border-radius:12px;"></div>
<div class="t" style="left:1170.7px;top:853.45px;font-size:15px;color:#e0e0e0;">Cannot start</div>
<svg class="r" style="left:1328.5px;top:841.35px;" width="24" height="21" viewBox="0 0 24 21"><path d="M12 0.6c0.6 0 1.1 0.3 1.4 0.9l9.6 17.1c0.6 1.1-0.2 2.2-1.4 2.2H2.4c-1.2 0-2-1.1-1.4-2.2l9.6-17.1c0.3-0.6 0.8-0.9 1.4-0.9z" fill="#e6ad3f"/><path d="M10.6 6.8h2.8l-0.4 7.4h-2z" fill="#1b1d21"/><circle cx="12" cy="16.7" r="1.5" fill="#1b1d21"/></svg>
<div class="t" style="left:1359.5px;top:852.08px;font-size:15.5px;color:#66a9e4;">7</div>
<div class="r" style="left:1560px;top:844.6px;width:55.1px;height:22px;background:#e7f1fa;border-radius:12px;border:1px solid #bee1f4;box-sizing:border-box;"></div>
<div class="t" style="left:1572.0px;top:855.60px;font-size:15px;color:#1f3a5c;">Cold</div>
<div class="r" style="left:1789.2px;top:846.4px;width:5.6px;height:5.6px;border-radius:50%;background:#7c7e82"></div>
<div class="r" style="left:1789.2px;top:853.2px;width:5.6px;height:5.6px;border-radius:50%;background:#7c7e82"></div>
<div class="r" style="left:1789.2px;top:860.1px;width:5.6px;height:5.6px;border-radius:50%;background:#7c7e82"></div>
<div class="r" style="left:390px;top:885.0px;width:1454px;height:1.5px;background:#444548;"></div>
<div class="t" style="left:405.5px;top:919.51px;font-size:16px;color:#66a9e4;">sixteenth-migration</div>
<svg class="r" style="left:606px;top:904.75px;" width="21" height="21" viewBox="0 0 21 21"><path d="M2.5 0.5h15.5a2 2 0 0 1 2 2v4.8h-5V5.4H5.9v1.9H0.5V2.5a2 2 0 0 1 2-2z" fill="#e0301e"/><path d="M0.5 8.3h5.4v3.6H0.5z M14.9 8.3h5.1v3.6h-5.1z" fill="#e0301e"/><path d="M0.5 12.9h5.4v1.8h9v-1.8h5.1v4.6a2 2 0 0 1-2 2H2.5a2 2 0 0 1-2-2z" fill="#e0301e"/></svg>
<div class="t" style="left:634.7px;top:916.55px;font-size:15px;color:#66a9e4;">openstack</div>
<div class="t" style="left:821.8px;top:919.61px;font-size:15.7px;color:#66a9e4;">openshift-infra</div>
<svg class="r" style="left:998.5px;top:910.05px;" width="18" height="16" viewBox="0 0 18 16"><path d="M0.7 0.7H12.5M0.7 0.7V9" fill="none" stroke="#73bcf7" stroke-width="1.1" stroke-dasharray="1.1 1.1"/><rect x="3.1" y="4" width="12.3" height="6.8" fill="none" stroke="#73bcf7" stroke-width="2"/><path d="M5.2 8h8" stroke="#73bcf7" stroke-width="1.1" stroke-dasharray="1.1 1.1"/><rect x="8.3" y="11.5" width="2" height="2.2" fill="#73bcf7"/><rect x="5.2" y="13.4" width="8.2" height="1.5" rx="0.7" fill="#73bcf7"/></svg>
<div class="t" style="left:1025.3px;top:918.85px;font-size:15px;color:#66a9e4;">3 VMs</div>
<div class="r" style="left:1162px;top:908.55px;width:78.9px;height:22px;background:#151515;border-radius:12px;"></div>
<div class="t" style="left:1172.4px;top:919.55px;font-size:15px;color:#f0f0f0;">Archived</div>
<div class="r" style="left:1789.2px;top:908.9px;width:5.6px;height:5.6px;border-radius:50%;background:#7c7e82"></div>
<div class="r" style="left:1789.2px;top:915.8px;width:5.6px;height:5.6px;border-radius:50%;background:#7c7e82"></div>
<div class="r" style="left:1789.2px;top:922.6px;width:5.6px;height:5.6px;border-radius:50%;background:#7c7e82"></div>
<div class="r" style="left:390px;top:947.5px;width:1454px;height:1.5px;background:#444548;"></div>
<div class="t" style="left:405.5px;top:982.01px;font-size:16px;color:#66a9e4;">tenth-migration</div>
<svg class="r" style="left:599.2px;top:977.85px;" width="31" height="13" viewBox="0 0 31 13"><path d="M1 1.2h3.3l3.3 7.4 3.3-7.4h3.1L9.2 12.4H6z" fill="#fff"/><path d="M12.5 12.4V4.6c0-2.2 1.3-3.4 3.5-3.4h10.2c2.3 0 3.8 1.3 3.8 3.6v7.6h-3.2V5.4c0-0.8-0.6-1.4-1.4-1.4h-1.1c-0.8 0-1.4 0.6-1.4 1.4v7h-3.2V5.4c0-0.8-0.6-1.4-1.4-1.4h-1.2c-0.8 0-1.4 0.6-1.4 1.4v7z" fill="#fff"/></svg>
<div class="t" style="left:638.0px;top:984.45px;font-size:15px;color:#66a9e4;">vcenter-01</div>
<div class="t" style="left:821.8px;top:982.11px;font-size:15.7px;color:#66a9e4;">openshift-infra</div>
<svg class="r" style="left:998.5px;top:972.55px;" width="18" height="16" viewBox="0 0 18 16"><path d="M0.7 0.7H12.5M0.7 0.7V9" fill="none" stroke="#73bcf7" stroke-width="1.1" stroke-dasharray="1.1 1.1"/><rect x="3.1" y="4" width="12.3" height="6.8" fill="none" stroke="#73bcf7" stroke-width="2"/><path d="M5.2 8h8" stroke="#73bcf7" stroke-width="1.1" stroke-dasharray="1.1 1.1"/><rect x="8.3" y="11.5" width="2" height="2.2" fill="#73bcf7"/><rect x="5.2" y="13.4" width="8.2" height="1.5" rx="0.7" fill="#73bcf7"/></svg>
<div class="t" style="left:1024.6px;top:981.35px;font-size:15px;color:#66a9e4;">1 VM</div>
<div class="r" style="left:1162px;top:972.25px;width:78.9px;height:22px;background:#151515;border-radius:12px;"></div>
<div class="t" style="left:1172.4px;top:983.25px;font-size:15px;color:#f0f0f0;">Archived</div>
<div class="r" style="left:1789.2px;top:971.4px;width:5.6px;height:5.6px;border-radius:50%;background:#7c7e82"></div>
<div class="r" style="left:1789.2px;top:978.2px;width:5.6px;height:5.6px;border-radius:50%;background:#7c7e82"></div>
<div class="r" style="left:1789.2px;top:985.1px;width:5.6px;height:5.6px;border-radius:50%;background:#7c7e82"></div>
<div class="r" style="left:390px;top:1010.0px;width:1454px;height:1.5px;background:#444548;"></div>
<div class="t" style="left:405.5px;top:1044.51px;font-size:16px;color:#66a9e4;">tenth-migration</div>
<svg class="r" style="left:599.2px;top:1037.95px;" width="31" height="13" viewBox="0 0 31 13"><path d="M1 1.2h3.3l3.3 7.4 3.3-7.4h3.1L9.2 12.4H6z" fill="#fff"/><path d="M12.5 12.4V4.6c0-2.2 1.3-3.4 3.5-3.4h10.2c2.3 0 3.8 1.3 3.8 3.6v7.6h-3.2V5.4c0-0.8-0.6-1.4-1.4-1.4h-1.1c-0.8 0-1.4 0.6-1.4 1.4v7h-3.2V5.4c0-0.8-0.6-1.4-1.4-1.4h-1.2c-0.8 0-1.4 0.6-1.4 1.4v7z" fill="#fff"/></svg>
<div class="t" style="left:638.0px;top:1044.55px;font-size:15px;color:#66a9e4;">vcenter-01</div>
<div class="t" style="left:821.8px;top:1044.61px;font-size:15.7px;color:#66a9e4;">openshift-infra</div>
<svg class="r" style="left:998.5px;top:1035.05px;" width="18" height="16" viewBox="0 0 18 16"><path d="M0.7 0.7H12.5M0.7 0.7V9" fill="none" stroke="#73bcf7" stroke-width="1.1" stroke-dasharray="1.1 1.1"/><rect x="3.1" y="4" width="12.3" height="6.8" fill="none" stroke="#73bcf7" stroke-width="2"/><path d="M5.2 8h8" stroke="#73bcf7" stroke-width="1.1" stroke-dasharray="1.1 1.1"/><rect x="8.3" y="11.5" width="2" height="2.2" fill="#73bcf7"/><rect x="5.2" y="13.4" width="8.2" height="1.5" rx="0.7" fill="#73bcf7"/></svg>
<div class="t" style="left:1021.8px;top:1043.85px;font-size:15px;color:#66a9e4;">25 VMs</div>
<div class="r" style="left:1162.3px;top:1032.35px;width:94.7px;height:22px;background:#4f5255;border-radius:12px;"></div>
<div class="t" style="left:1172.7px;top:1043.35px;font-size:15px;color:#e0e0e0;">Incomplete</div>
<svg class="r" style="left:1329.2px;top:1032.65px;" width="22" height="22" viewBox="0 0 22 22"><circle cx="11" cy="11" r="11" fill="#579d4b"/><path d="M5.2 11.4l4.3 3.9 7.4-7.5" fill="none" stroke="#1b1d21" stroke-width="2.9"/></svg>
<div class="t" style="left:1357.0px;top:1043.88px;font-size:15.5px;color:#66a9e4;">19</div>
<svg class="r" style="left:1384.2px;top:1032.65px;" width="22" height="22" viewBox="0 0 22 22"><circle cx="11" cy="11" r="11" fill="#c8321e"/><path d="M9.4 4.6h3.2l-0.5 8.6h-2.2z" fill="#1b1d21"/><circle cx="11" cy="16.3" r="1.7" fill="#1b1d21"/></svg>
<div class="t" style="left:1412.5px;top:1043.88px;font-size:15.5px;color:#66a9e4;">6</div>
<div class="r" style="left:1560px;top:1031.4px;width:55.1px;height:22px;background:#e7f1fa;border-radius:12px;border:1px solid #bee1f4;box-sizing:border-box;"></div>
<div class="t" style="left:1572.0px;top:1042.40px;font-size:15px;color:#1f3a5c;">Cold</div>
<div class="r" style="left:1789.2px;top:1033.8px;width:5.6px;height:5.6px;border-radius:50%;background:#7c7e82"></div>
<div class="r" style="left:1789.2px;top:1040.8px;width:5.6px;height:5.6px;border-radius:50%;background:#7c7e82"></div>
<div class="r" style="left:1789.2px;top:1047.7px;width:5.6px;height:5.6px;border-radius:50%;background:#7c7e82"></div>
<div class="r" style="left:390px;top:1072.5px;width:1454px;height:1.5px;background:#444548;"></div>
<div class="t" style="left:405.5px;top:1107.01px;font-size:16px;color:#66a9e4;">thirteenth-migration</div>
<svg class="r" style="left:599.2px;top:1098.95px;" width="31" height="13" viewBox="0 0 31 13"><path d="M1 1.2h3.3l3.3 7.4 3.3-7.4h3.1L9.2 12.4H6z" fill="#fff"/><path d="M12.5 12.4V4.6c0-2.2 1.3-3.4 3.5-3.4h10.2c2.3 0 3.8 1.3 3.8 3.6v7.6h-3.2V5.4c0-0.8-0.6-1.4-1.4-1.4h-1.1c-0.8 0-1.4 0.6-1.4 1.4v7h-3.2V5.4c0-0.8-0.6-1.4-1.4-1.4h-1.2c-0.8 0-1.4 0.6-1.4 1.4v7z" fill="#fff"/></svg>
<div class="t" style="left:638.0px;top:1105.55px;font-size:15px;color:#66a9e4;">vcenter-01</div>
<div class="t" style="left:821.8px;top:1107.11px;font-size:15.7px;color:#66a9e4;">openshift-infra</div>
<svg class="r" style="left:998.5px;top:1097.55px;" width="18" height="16" viewBox="0 0 18 16"><path d="M0.7 0.7H12.5M0.7 0.7V9" fill="none" stroke="#73bcf7" stroke-width="1.1" stroke-dasharray="1.1 1.1"/><rect x="3.1" y="4" width="12.3" height="6.8" fill="none" stroke="#73bcf7" stroke-width="2"/><path d="M5.2 8h8" stroke="#73bcf7" stroke-width="1.1" stroke-dasharray="1.1 1.1"/><rect x="8.3" y="11.5" width="2" height="2.2" fill="#73bcf7"/><rect x="5.2" y="13.4" width="8.2" height="1.5" rx="0.7" fill="#73bcf7"/></svg>
<div class="t" style="left:1024.6px;top:1106.35px;font-size:15px;color:#66a9e4;">1 VM</div>
<div class="r" style="left:1162.3px;top:1094.55px;width:94.7px;height:22px;background:#4f5255;border-radius:12px;"></div>
<div class="t" style="left:1172.7px;top:1105.55px;font-size:15px;color:#e0e0e0;">Incomplete</div>
<svg class="r" style="left:1329.2px;top:1093.75px;" width="22" height="22" viewBox="0 0 22 22"><circle cx="11" cy="11" r="11" fill="#c8321e"/><path d="M9.4 4.6h3.2l-0.5 8.6h-2.2z" fill="#1b1d21"/><circle cx="11" cy="16.3" r="1.7" fill="#1b1d21"/></svg>
<div class="t" style="left:1357.0px;top:1104.98px;font-size:15.5px;color:#66a9e4;">1</div>
<div class="r" style="left:1560px;top:1094.85px;width:55.1px;height:22px;background:#e7f1fa;border-radius:12px;border:1px solid #bee1f4;box-sizing:border-box;"></div>
<div class="t" style="left:1572.0px;top:1105.85px;font-size:15px;color:#1f3a5c;">Cold</div>
<div class="r" style="left:1789.2px;top:1096.3px;width:5.6px;height:5.6px;border-radius:50%;background:#7c7e82"></div>
<div class="r" style="left:1789.2px;top:1103.2px;width:5.6px;height:5.6px;border-radius:50%;background:#7c7e82"></div>
<div class="r" style="left:1789.2px;top:1110.2px;width:5.6px;height:5.6px;border-radius:50%;background:#7c7e82"></div>
<div class="r" style="left:390px;top:1135.0px;width:1454px;height:1.5px;background:#444548;"></div>
<div class="t" style="left:405.5px;top:1169.51px;font-size:16px;color:#66a9e4;">twenty-fifth-migration</div>
<svg class="r" style="left:599.2px;top:1162.75px;" width="31" height="13" viewBox="0 0 31 13"><path d="M1 1.2h3.3l3.3 7.4 3.3-7.4h3.1L9.2 12.4H6z" fill="#fff"/><path d="M12.5 12.4V4.6c0-2.2 1.3-3.4 3.5-3.4h10.2c2.3 0 3.8 1.3 3.8 3.6v7.6h-3.2V5.4c0-0.8-0.6-1.4-1.4-1.4h-1.1c-0.8 0-1.4 0.6-1.4 1.4v7h-3.2V5.4c0-0.8-0.6-1.4-1.4-1.4h-1.2c-0.8 0-1.4 0.6-1.4 1.4v7z" fill="#fff"/></svg>
<div class="t" style="left:638.0px;top:1169.35px;font-size:15px;color:#66a9e4;">vcenter-01</div>
<div class="t" style="left:821.8px;top:1169.61px;font-size:15.7px;color:#66a9e4;">openshift-infra</div>
<svg class="r" style="left:998.5px;top:1160.05px;" width="18" height="16" viewBox="0 0 18 16"><path d="M0.7 0.7H12.5M0.7 0.7V9" fill="none" stroke="#73bcf7" stroke-width="1.1" stroke-dasharray="1.1 1.1"/><rect x="3.1" y="4" width="12.3" height="6.8" fill="none" stroke="#73bcf7" stroke-width="2"/><path d="M5.2 8h8" stroke="#73bcf7" stroke-width="1.1" stroke-dasharray="1.1 1.1"/><rect x="8.3" y="11.5" width="2" height="2.2" fill="#73bcf7"/><rect x="5.2" y="13.4" width="8.2" height="1.5" rx="0.7" fill="#73bcf7"/></svg>
<div class="t" style="left:1025.3px;top:1168.85px;font-size:15px;color:#66a9e4;">3 VMs</div>
<div class="r" style="left:1161.2px;top:1145.5px;width:92.8px;height:44.6px;background:transparent;border:1.5px solid #73bcf7;border-radius:3px;box-sizing:border-box"></div>
<svg class="r" style="left:1180.5px;top:1162px;" width="11" height="12" viewBox="0 0 11 12"><path d="M0.5 0.5l10 5.5-10 5.5z" fill="#73bcf7"/></svg>
<div class="t" style="left:1200.6px;top:1167.56px;font-size:16px;color:#66a9e4;">Start</div>
<div class="r" style="left:1560px;top:1157.25px;width:55.1px;height:22px;background:#e7f1fa;border-radius:12px;border:1px solid #bee1f4;box-sizing:border-box;"></div>
<div class="t" style="left:1572.0px;top:1168.25px;font-size:15px;color:#1f3a5c;">Cold</div>
<div class="r" style="left:1789.2px;top:1158.8px;width:5.6px;height:5.6px;border-radius:50%;background:#7c7e82"></div>
<div class="r" style="left:1789.2px;top:1165.8px;width:5.6px;height:5.6px;border-radius:50%;background:#7c7e82"></div>
<div class="r" style="left:1789.2px;top:1172.7px;width:5.6px;height:5.6px;border-radius:50%;background:#7c7e82"></div>
<div class="r" style="left:390px;top:1197.5px;width:1454px;height:1.5px;background:#444548;"></div>
<div class="t" style="left:405.5px;top:1232.01px;font-size:16px;color:#66a9e4;">twenty-first-migration</div>
<svg class="r" style="left:596.8px;top:1215.25px;" width="36" height="29" viewBox="0 0 36 29"><g transform="scale(0.63)"><path d="M5.1 22.3C5.5 19.3 9 17.2 14.5 17L43.2 22.9C46.5 24.2 50.1 27 50.1 30.2C50.1 35 44 39.1 36.6 39.1C28 39.1 17 35 10 30.5C6.8 28.4 4.9 25.2 5.1 22.3Z" fill="#e0301e"/><path d="M14.6 16.5C15.8 12 17 7.5 18.8 6.2C20.5 5 23 5.8 24.5 6.4C26 5.6 28.5 5.2 31.5 5.8C36 6.8 39.5 9 40.8 13C41.8 16 42.3 19.5 42.3 22.9C37 25.5 32 25 28.6 24.2C23 22.5 18 19.5 14.6 16.5Z" fill="#e0301e"/><path d="M14.6 16.5C18 19.5 23 22.5 28.6 24.2C32 25 37 25.5 42.3 22.9L42.6 27C37.5 29.6 33 29.8 28.6 29.2C22.5 27.8 17.5 23.2 14.2 19.8Z" fill="#000"/></g></svg>
<div class="t" style="left:633.9px;top:1230.28px;font-size:15.5px;color:#66a9e4;">redhat-virtualization</div>
<div class="t" style="left:821.8px;top:1232.11px;font-size:15.7px;color:#66a9e4;">openshift-infra</div>
<svg class="r" style="left:998.5px;top:1222.55px;" width="18" height="16" viewBox="0 0 18 16"><path d="M0.7 0.7H12.5M0.7 0.7V9" fill="none" stroke="#73bcf7" stroke-width="1.1" stroke-dasharray="1.1 1.1"/><rect x="3.1" y="4" width="12.3" height="6.8" fill="none" stroke="#73bcf7" stroke-width="2"/><path d="M5.2 8h8" stroke="#73bcf7" stroke-width="1.1" stroke-dasharray="1.1 1.1"/><rect x="8.3" y="11.5" width="2" height="2.2" fill="#73bcf7"/><rect x="5.2" y="13.4" width="8.2" height="1.5" rx="0.7" fill="#73bcf7"/></svg>
<div class="t" style="left:1024.6px;top:1231.35px;font-size:15px;color:#66a9e4;">1 VM</div>
<div class="r" style="left:1162.8px;top:1220.55px;width:83.1px;height:22px;background:#151515;border-radius:12px;"></div>
<div class="t" style="left:1173.2px;top:1231.55px;font-size:15px;color:#f0f0f0;">Canceled</div>
<svg class="r" style="left:1326.6px;top:1221.25px;" width="22" height="22" viewBox="0 0 22 22"><circle cx="11" cy="11" r="11" fill="#6a6e73"/><rect x="4.8" y="9.2" width="12.4" height="3.6" rx="0.6" fill="#1b1d21"/></svg>
<div class="t" style="left:1352.8px;top:1232.48px;font-size:15.5px;color:#66a9e4;">1</div>
<div class="r" style="left:1789.2px;top:1221.3px;width:5.6px;height:5.6px;border-radius:50%;background:#7c7e82"></div>
<div class="r" style="left:1789.2px;top:1228.2px;width:5.6px;height:5.6px;border-radius:50%;background:#7c7e82"></div>
<div class="r" style="left:1789.2px;top:1235.2px;width:5.6px;height:5.6px;border-radius:50%;background:#7c7e82"></div>
<div class="r" style="left:390px;top:1260.0px;width:1454px;height:1.5px;background:#444548;"></div>
<div class="t" style="left:405.5px;top:1294.51px;font-size:16px;color:#66a9e4;">twenty-fourth-migration</div>
<svg class="r" style="left:599.2px;top:1286.3500000000001px;" width="31" height="13" viewBox="0 0 31 13"><path d="M1 1.2h3.3l3.3 7.4 3.3-7.4h3.1L9.2 12.4H6z" fill="#fff"/><path d="M12.5 12.4V4.6c0-2.2 1.3-3.4 3.5-3.4h10.2c2.3 0 3.8 1.3 3.8 3.6v7.6h-3.2V5.4c0-0.8-0.6-1.4-1.4-1.4h-1.1c-0.8 0-1.4 0.6-1.4 1.4v7h-3.2V5.4c0-0.8-0.6-1.4-1.4-1.4h-1.2c-0.8 0-1.4 0.6-1.4 1.4v7z" fill="#fff"/></svg>
<div class="t" style="left:638.0px;top:1292.95px;font-size:15px;color:#66a9e4;">vcenter-01</div>
<div class="t" style="left:821.8px;top:1294.61px;font-size:15.7px;color:#66a9e4;">openshift-infra</div>
<svg class="r" style="left:998.5px;top:1285.05px;" width="18" height="16" viewBox="0 0 18 16"><path d="M0.7 0.7H12.5M0.7 0.7V9" fill="none" stroke="#73bcf7" stroke-width="1.1" stroke-dasharray="1.1 1.1"/><rect x="3.1" y="4" width="12.3" height="6.8" fill="none" stroke="#73bcf7" stroke-width="2"/><path d="M5.2 8h8" stroke="#73bcf7" stroke-width="1.1" stroke-dasharray="1.1 1.1"/><rect x="8.3" y="11.5" width="2" height="2.2" fill="#73bcf7"/><rect x="5.2" y="13.4" width="8.2" height="1.5" rx="0.7" fill="#73bcf7"/></svg>
<div class="t" style="left:1025.3px;top:1293.85px;font-size:15px;color:#66a9e4;">3 VMs</div>
<div class="r" style="left:1162.8px;top:1280.6px;width:83.1px;height:22px;background:#151515;border-radius:12px;"></div>
<div class="t" style="left:1173.2px;top:1291.60px;font-size:15px;color:#f0f0f0;">Canceled</div>
<svg class="r" style="left:1326.6px;top:1279.8px;" width="22" height="22" viewBox="0 0 22 22"><circle cx="11" cy="11" r="11" fill="#6a6e73"/><rect x="4.8" y="9.2" width="12.4" height="3.6" rx="0.6" fill="#1b1d21"/></svg>
<div class="t" style="left:1352.8px;top:1291.03px;font-size:15.5px;color:#66a9e4;">3</div>
<div class="r" style="left:1559.2px;top:1282.65px;width:61.1px;height:22px;background:#fdf6ee;border-radius:12px;border:1px solid #ecbd85;box-sizing:border-box;"></div>
<div class="t" style="left:1570.5px;top:1293.65px;font-size:15px;color:#3b2a0e;">Warm</div>
<div class="t" style="left:1636.5px;top:1294.25px;font-size:15px;color:#66a9e4;">Schedule cutover</div>
<div class="r" style="left:1789.2px;top:1283.8px;width:5.6px;height:5.6px;border-radius:50%;background:#7c7e82"></div>
<div class="r" style="left:1789.2px;top:1290.8px;width:5.6px;height:5.6px;border-radius:50%;background:#7c7e82"></div>
<div class="r" style="left:1789.2px;top:1297.7px;width:5.6px;height:5.6px;border-radius:50%;background:#7c7e82"></div>
<div class="r" style="left:390px;top:1322.5px;width:1454px;height:1.5px;background:#444548;"></div>
<div class="t" style="left:405.5px;top:1357.01px;font-size:16px;color:#66a9e4;">twenty-eighth-migration</div>
<svg class="r" style="left:599.2px;top:1350.65px;" width="31" height="13" viewBox="0 0 31 13"><path d="M1 1.2h3.3l3.3 7.4 3.3-7.4h3.1L9.2 12.4H6z" fill="#fff"/><path d="M12.5 12.4V4.6c0-2.2 1.3-3.4 3.5-3.4h10.2c2.3 0 3.8 1.3 3.8 3.6v7.6h-3.2V5.4c0-0.8-0.6-1.4-1.4-1.4h-1.1c-0.8 0-1.4 0.6-1.4 1.4v7h-3.2V5.4c0-0.8-0.6-1.4-1.4-1.4h-1.2c-0.8 0-1.4 0.6-1.4 1.4v7z" fill="#fff"/></svg>
<div class="t" style="left:638.0px;top:1357.25px;font-size:15px;color:#66a9e4;">vcenter-01</div>
<div class="t" style="left:821.8px;top:1357.11px;font-size:15.7px;color:#66a9e4;">openshift-infra</div>
<svg class="r" style="left:998.5px;top:1347.55px;" width="18" height="16" viewBox="0 0 18 16"><path d="M0.7 0.7H12.5M0.7 0.7V9" fill="none" stroke="#73bcf7" stroke-width="1.1" stroke-dasharray="1.1 1.1"/><rect x="3.1" y="4" width="12.3" height="6.8" fill="none" stroke="#73bcf7" stroke-width="2"/><path d="M5.2 8h8" stroke="#73bcf7" stroke-width="1.1" stroke-dasharray="1.1 1.1"/><rect x="8.3" y="11.5" width="2" height="2.2" fill="#73bcf7"/><rect x="5.2" y="13.4" width="8.2" height="1.5" rx="0.7" fill="#73bcf7"/></svg>
<div class="t" style="left:1024.6px;top:1356.35px;font-size:15px;color:#66a9e4;">1 VM</div>
<div class="r" style="left:1161.4px;top:1344.2px;width:85.8px;height:22px;background:#151515;border-radius:12px;"></div>
<div class="t" style="left:1171.8px;top:1355.20px;font-size:15px;color:#f0f0f0;">Complete</div>
<svg class="r" style="left:1329.2px;top:1340.0px;" width="22" height="22" viewBox="0 0 22 22"><circle cx="11" cy="11" r="11" fill="#579d4b"/><path d="M5.2 11.4l4.3 3.9 7.4-7.5" fill="none" stroke="#1b1d21" stroke-width="2.9"/></svg>
<div class="t" style="left:1357.0px;top:1351.23px;font-size:15.5px;color:#66a9e4;">1</div>
<div class="r" style="left:1560px;top:1342.75px;width:55.1px;height:22px;background:#e7f1fa;border-radius:12px;border:1px solid #bee1f4;box-sizing:border-box;"></div>
<div class="t" style="left:1572.0px;top:1353.75px;font-size:15px;color:#1f3a5c;">Cold</div>
<div class="r" style="left:1789.2px;top:1346.3px;width:5.6px;height:5.6px;border-radius:50%;background:#7c7e82"></div>
<div class="r" style="left:1789.2px;top:1353.2px;width:5.6px;height:5.6px;border-radius:50%;background:#7c7e82"></div>
<div class="r" style="left:1789.2px;top:1360.2px;width:5.6px;height:5.6px;border-radius:50%;background:#7c7e82"></div>
<div class="r" style="left:390px;top:1385.0px;width:1454px;height:1.5px;background:#444548;"></div>
<div class="r" style="left:1399px;top:359px;width:356px;height:366px;background:#28292d;box-shadow:0 6px 12px rgba(0,0,0,0.22),0 0 5px rgba(0,0,0,0.16)"></div>
<svg class="r" style="left:1376px;top:520px;" width="24" height="46" viewBox="0 0 24 46"><path d="M24 0L0.5 23 24 46z" fill="#28292d"/></svg>
<div class="t" style="left:1429.5px;top:405.31px;font-size:16.7px;color:#f0f0f0;font-weight:700;">4 VM migrations paused</div>
<div class="t" style="left:1429.5px;top:453.10px;font-size:15px;color:#e0e0e0;">To resume, the cutover must be scheduled.</div>
<div class="t" style="left:1429.5px;top:479.30px;font-size:15px;color:#e0e0e0;">When the cutover starts, VMs included in</div>
<div class="t" style="left:1429.5px;top:505.40px;font-size:15px;color:#e0e0e0;">this plan will shut down.</div>
<div class="r" style="left:1438.5px;top:556.3px;width:3.6px;height:3.6px;border-radius:50%;background:#e0e0e0"></div>
<div class="t" style="left:1451.4px;top:557.43px;font-size:15.5px;color:#e0e0e0;">haproxy-cf5df</div>
<div class="r" style="left:1438.5px;top:582.5px;width:3.6px;height:3.6px;border-radius:50%;background:#e0e0e0"></div>
<div class="t" style="left:1451.4px;top:583.63px;font-size:15.5px;color:#e0e0e0;">qwezef-zei8efa</div>
<div class="r" style="left:1438.5px;top:608.7px;width:3.6px;height:3.6px;border-radius:50%;background:#e0e0e0"></div>
<div class="t" style="left:1451.4px;top:609.83px;font-size:15.5px;color:#e0e0e0;">zwefqef-1zeee</div>
<div class="r" style="left:1438.5px;top:634.9px;width:3.6px;height:3.6px;border-radius:50%;background:#e0e0e0"></div>
<div class="t" style="left:1451.4px;top:636.03px;font-size:15.5px;color:#e0e0e0;">4zefjeiz-epoieq</div>
<div class="t" style="left:1429.4px;top:688.40px;font-size:15px;color:#66a9e4;">Schedule cutover</div>
</div></body></html>
